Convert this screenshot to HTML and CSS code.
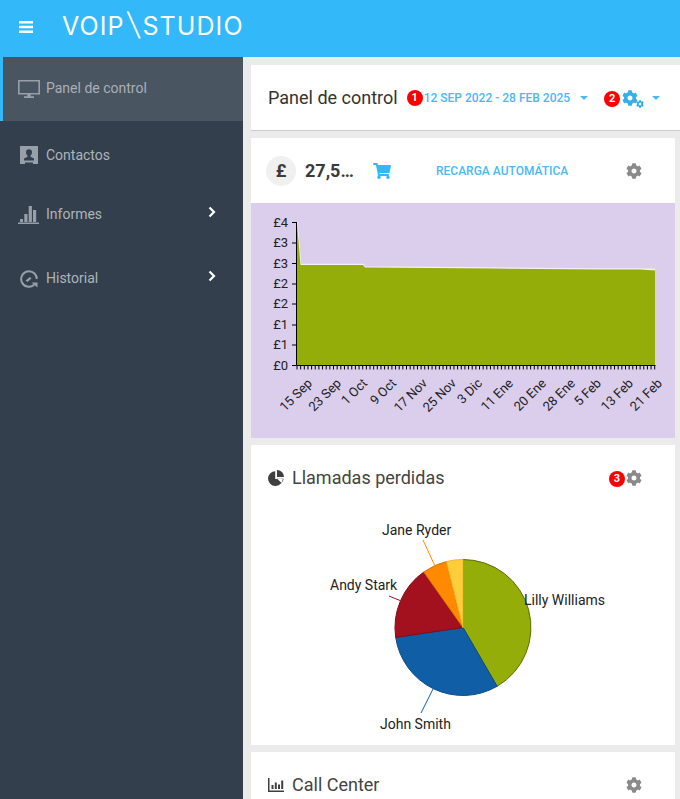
FILE: index.html
```html
<!DOCTYPE html>
<html lang="es">
<head>
<meta charset="utf-8">
<title>VoIPstudio</title>
<link rel="stylesheet" href="styles.css">
</head>
<body>
<svg class="defs" width="0" height="0">
  <symbol id="gear" viewBox="0 0 512 512"><path d="M487.4 315.7l-42.6-24.6c4.3-23.2 4.3-47 0-70.2l42.6-24.6c4.9-2.8 7.1-8.6 5.5-14-11.1-35.6-30-67.8-54.7-94.6-3.8-4.1-10-5.1-14.8-2.3L380.8 110c-17.9-15.4-38.5-27.3-60.8-35.1V25.8c0-5.6-3.9-10.5-9.4-11.7-36.7-8.2-74.3-7.8-109.2 0-5.5 1.2-9.4 6.1-9.4 11.7V75c-22.2 7.9-42.8 19.8-60.8 35.1L88.7 85.5c-4.9-2.8-11-1.9-14.8 2.3-24.7 26.7-43.6 58.9-54.7 94.6-1.7 5.4.6 11.2 5.5 14L67.3 221c-4.3 23.2-4.3 47 0 70.2l-42.6 24.6c-4.9 2.8-7.1 8.6-5.5 14 11.1 35.6 30 67.8 54.7 94.6 3.8 4.1 10 5.1 14.8 2.3l42.6-24.6c17.9 15.4 38.5 27.3 60.8 35.1v49.2c0 5.6 3.9 10.5 9.4 11.7 36.7 8.2 74.3 7.8 109.2 0 5.5-1.2 9.4-6.1 9.4-11.7v-49.2c22.2-7.9 42.8-19.8 60.8-35.1l42.6 24.6c4.9 2.8 11 1.9 14.8-2.3 24.7-26.7 43.6-58.9 54.7-94.6 1.5-5.5-.7-11.3-5.6-14.1zM256 336c-44.1 0-80-35.9-80-80s35.9-80 80-80 80 35.9 80 80-35.9 80-80 80z"/></symbol>
  <symbol id="chev" viewBox="0 0 10 12"><path d="M2.5 1.5 7 6l-4.5 4.500" fill="none" stroke="currentColor" stroke-width="2.200"/></symbol>
</svg>

<header class="topbar">
  <svg class="burger" viewBox="0 0 14 12"><path d="M0 0h14v2.400H0zM0 4.800h14v2.400H0zM0 9.600h14V12H0z"/></svg>
  <div class="logo">VOIP<span class="logo-slash">\</span>STUDIO</div>
</header>

<div class="layout">
  <nav class="sidebar">
    <a class="nav-item nav-active">
      <svg class="nav-icon" viewBox="0 0 22 18"><path d="M0 0h22v14.500H0zM1.600 1.600v11.300h18.800V1.600zM9.300 14.500h3.400v1.800h3.300V18H6v-1.700h3.300z" fill-rule="evenodd"/></svg>
      <span>Panel de control</span>
    </a>
    <a class="nav-item nav-contacts">
      <svg class="nav-icon" viewBox="0 0 22 18"><path d="M2 0h18v18h-5v-1.500h-8V18H2zM11 3.200a3 3 0 0 0-3 3c0 1.500.7 2.700 1.500 3.400v1.200L6 12.500v2h10v-2l-3.500-1.700V9.600c.8-.7 1.500-1.900 1.500-3.400a3 3 0 0 0-3-3z" fill-rule="evenodd"/></svg>
      <span>Contactos</span>
    </a>
    <a class="nav-item nav-reports">
      <svg class="nav-icon" viewBox="0 0 22 18"><path d="M0 16.500h21V18H0zM2 13h3v3H2zM6.300 8h3.200v8H6.300zM10.700 0h3.200v16h-3.200zM15 4h3.200v12H15z"/></svg>
      <span>Informes</span>
      <svg class="nav-chev"><use href="#chev"/></svg>
    </a>
    <a class="nav-item nav-reports">
      <svg class="nav-icon" viewBox="0 0 22 18"><path d="M11 1.200a7.800 7.800 0 1 0 5.200 13.600M18.800 9A7.800 7.800 0 0 0 11 1.200" fill="none" stroke="currentColor" stroke-width="2"/><path d="M7.500 10.500l4.500-3.500 1.500 1.500-4 3.500z"/><path d="M13.500 12.500h6v5z"/></svg>
      <span>Historial</span>
      <svg class="nav-chev"><use href="#chev"/></svg>
    </a>
  </nav>

  <main class="content">
    <section class="page-head">
      <h1 class="page-title">Panel de control</h1>
      <span class="badge badge-one">1</span>
      <span class="date-range">12 SEP 2022 - 28 FEB 2025</span>
      <span class="caret caret-date"></span>
      <span class="badge badge-two">2</span>
      <span class="gears">
        <svg class="gear-big"><use href="#gear"/></svg>
        <svg class="gear-small"><use href="#gear"/></svg>
      </span>
      <span class="caret caret-gears"></span>
    </section>

    <section class="card">
      <div class="balance-row">
        <span class="currency">£</span>
        <span class="amount">27,5…</span>
        <svg class="cart" viewBox="0 0 576 512"><path d="M528.12 301.319l47.273-208C578.806 78.301 567.391 64 551.99 64H159.208l-9.166-44.81C147.758 8.021 137.93 0 126.529 0H24C10.745 0 0 10.745 0 24v16c0 13.255 10.745 24 24 24h69.883l70.248 343.435C147.325 417.1 136 435.222 136 456c0 30.928 25.072 56 56 56s56-25.072 56-56c0-15.674-6.447-29.835-16.824-40h209.647C430.447 426.165 424 440.326 424 456c0 30.928 25.072 56 56 56s56-25.072 56-56c0-22.172-12.888-41.332-31.579-50.405l5.517-24.276c3.413-15.018-8.002-29.319-23.403-29.319H218.117l-6.545-32h293.145c11.206 0 20.92-7.754 23.403-18.681z"/></svg>
        <span class="recharge">RECARGA AUTOMÁTICA</span>
        <svg class="gear"><use href="#gear"/></svg>
      </div>
      <svg class="balance-chart" viewBox="251 203 424 235">
        <path class="area-edge" d="M297 222 300.500 264.500H363L365 267 490 268 595 269 640 269 655 269.500"/>
        <path class="area" d="M297 223 300.500 265H363L365 267.500 490 268.500 595 269.500 640 269.500 655 270.500V365H297z"/>
        <path class="axis" d="M296.500 222V365.500H655.500"/>
        <path class="axis" d="M292 222.500h4M292 243h4M292 263.500h4M292 284h4M292 304h4M292 325h4M292 345h4M292 365.500h4"/>
        <path class="x-ticks" d="M296.500 367.500H656"/>
        <g class="chart-text axis-text y-labels">
          <text x="288" y="227">£4</text>
          <text x="288" y="247">£3</text>
          <text x="288" y="268">£3</text>
          <text x="288" y="288">£2</text>
          <text x="288" y="308">£2</text>
          <text x="288" y="329">£1</text>
          <text x="288" y="349">£1</text>
          <text x="288" y="370">£0</text>
        </g>
        <g class="chart-text axis-text x-labels">
          <text transform="translate(313 384) rotate(-45)">15 Sep</text>
          <text transform="translate(342 384) rotate(-45)">23 Sep</text>
          <text transform="translate(368 384) rotate(-45)">1 Oct</text>
          <text transform="translate(397 384) rotate(-45)">9 Oct</text>
          <text transform="translate(428 384) rotate(-45)">17 Nov</text>
          <text transform="translate(457 384) rotate(-45)">25 Nov</text>
          <text transform="translate(483 384) rotate(-45)">3 Dic</text>
          <text transform="translate(514 384) rotate(-45)">11 Ene</text>
          <text transform="translate(547 384) rotate(-45)">20 Ene</text>
          <text transform="translate(576 384) rotate(-45)">28 Ene</text>
          <text transform="translate(602 384) rotate(-45)">5 Feb</text>
          <text transform="translate(634 384) rotate(-45)">13 Feb</text>
          <text transform="translate(663 384) rotate(-45)">21 Feb</text>
        </g>
      </svg>
    </section>

    <section class="card card-pie">
      <div class="card-head">
        <svg class="head-icon" viewBox="0 0 16 16"><path d="M7.200 1.200A7.400 7.400 0 1 0 14.800 9H7.200zM9 0v7h7a7 7 0 0 0-7-7zM9.200 8.800h6.400c-.2 1.600-.9 3-2 4.100z"/></svg>
        <h2 class="card-title">Llamadas perdidas</h2>
        <span class="badge badge-three">3</span>
        <svg class="gear"><use href="#gear"/></svg>
      </div>
      <svg class="pie-chart" viewBox="251 510 424 235">
        <path class="lead" stroke="#ff8a00" d="M423 540 434.500 565"/>
        <path class="lead" stroke="#a3111f" d="M389 596 400 600.500"/>
        <path class="lead" stroke="#105ea6" d="M421 713 433 689"/>
        <path fill="#95ad08" stroke="#5e6d05" d="M463 627.500V559.500A68 68 0 0 1 497.100 686.300z"/>
        <path fill="#105ea6" stroke="#0c4a83" d="M463 627.500 497.100 686.300A68 68 0 0 1 395.700 637.400z"/>
        <path fill="#a3111f" stroke="#7f0d18" d="M463 627.500 395.700 637.400A68 68 0 0 1 423.800 572z"/>
        <path fill="#ff8a00" stroke="#d97500" d="M463 627.500 423.800 572A68 68 0 0 1 446.500 561.500z"/>
        <path fill="#ffcc3a" stroke="#e8b830" d="M463 627.500 446.500 561.500A68 68 0 0 1 463 559.500z"/>
        <g class="chart-text">
          <text x="382" y="535">Jane Ryder</text>
          <text x="330" y="590">Andy Stark</text>
          <text x="524" y="605">Lilly Williams</text>
          <text x="380" y="729">John Smith</text>
        </g>
      </svg>
    </section>

    <section class="card card-last">
      <div class="card-head">
        <svg class="head-icon" viewBox="0 0 16 16"><path d="M0 1h1.500v12.500H16V15H0zM3.500 8h2v4h-2zM6.800 5.500h2V12h-2zM10 7.500h2V12h-2zM13.200 3.500h2V12h-2z"/></svg>
        <h2 class="card-title">Call Center</h2>
        <svg class="gear"><use href="#gear"/></svg>
      </div>
    </section>
  </main>
</div>
</body>
</html>
```

FILE: styles.css
```css
* { box-sizing: border-box; }
html, body { margin: 0; padding: 0; height: 799px; overflow: hidden; }
body { font-family: Roboto, "Liberation Sans", sans-serif; background: #ebebeb; color: #333; }
.defs { position: absolute; }

.topbar { height: 57px; background: #33b8f9; display: flex; align-items: center; color: #fff; }
.burger { width: 14px; height: 12px; margin: 0 0 0 19px; fill: #fff; position: relative; top: -2px; }
.logo { margin-left: 29px; font-family: Inter, "Open Sans", sans-serif; font-size: 25px; font-weight: 400; line-height: 30px; letter-spacing: 1.100px; position: relative; top: -3.500px; white-space: nowrap; }
.logo-slash { display: inline-block; font-size: 31px; font-weight: 300; line-height: 30px; transform: skewX(10deg); margin: 0 4px 0 3px; letter-spacing: 0; }

.layout { display: flex; height: 742px; }
.sidebar { width: 243px; flex: none; background: #333f4d; }
.nav-item { display: flex; align-items: center; height: 64px; padding-left: 18px; font-size: 14px; line-height: 20px; color: #aeb4ba; }
.nav-active { background: #4a5562; border-left: 3px solid #33b8f9; padding-left: 15px; padding-bottom: 2px; color: #a9afb5; }
.nav-active .nav-icon { margin-top: 2px; }
.nav-contacts { height: 61px; padding-top: 7px; }
.nav-reports { height: 64px; }
.nav-reports .nav-icon { margin-top: 2px; }
.nav-icon { width: 22px; height: 18px; margin-right: 6px; flex: none; fill: #97a0aa; color: #97a0aa; }
.nav-chev { width: 10px; height: 12px; margin-left: auto; margin-right: 26px; margin-top: -4px; color: #fff; }

.content { flex: 1; min-width: 0; padding: 8px 5px 0 8px; display: flex; flex-direction: column; gap: 7px; }

.page-head { height: 66px; flex: none; margin-right: -5px; background: #fff; border-bottom: 1px solid #ccc; display: flex; align-items: center; padding-left: 17px; }
.page-title { margin: 0; font-size: 18px; font-weight: 400; color: #333; white-space: nowrap; }
.badge { flex: none; width: 16px; height: 16px; border-radius: 50%; background: #f00; color: #fff; font-size: 11px; font-weight: 700; line-height: 16px; text-align: center; }
.badge-one { margin-left: 9px; }
.date-range { font-size: 12px; font-weight: 500; color: #4ab9f5; margin-left: 1px; white-space: nowrap; }
.caret { width: 0; height: 0; border: 4px solid transparent; border-top-color: #4ab9f5; border-bottom: 0; flex: none; margin-top: 1px; }
.caret-date { margin-left: 10px; }
.badge-two { margin-left: 16px; margin-top: 3px; }
.gears { display: flex; align-items: flex-end; height: 20px; flex: none; margin-left: 2px; }
.gear-big { width: 16px; height: 16px; fill: #35aeec; margin-bottom: 2px; }
.gear-small { width: 8px; height: 8px; fill: #35aeec; margin-left: -2px; }
.caret-gears { margin-left: 8px; }

.card { background: #fff; flex: none; }
.balance-row { height: 65px; display: flex; align-items: center; padding-left: 15px; }
.currency { width: 30px; height: 30px; border-radius: 50%; background: #f0f0f0; font-size: 18px; font-weight: 700; line-height: 30px; text-align: center; color: #3c3c3c; flex: none; }
.amount { margin-left: 9px; font-size: 18px; font-weight: 700; color: #3a3a3a; width: 68px; flex: none; }
.cart { width: 18px; height: 16px; fill: #33b8f9; flex: none; }
.recharge { margin-left: 45px; font-size: 12px; font-weight: 500; color: #4ab9f5; width: 190px; flex: none; white-space: nowrap; }
.gear { width: 16px; height: 16px; fill: #8a8a8a; flex: none; }
.balance-row .gear, .card-head .gear { margin-left: auto; margin-right: 33px; }
.balance-chart { display: block; width: 424px; height: 235px; background: #dbcdec; }
.area { fill: #95ad08; }
.area-edge { fill: none; stroke: #f3f1f5; stroke-width: 1.500; }
.axis { fill: none; stroke: #000; stroke-width: 1; }
.x-ticks { fill: none; stroke: #000; stroke-width: 4; stroke-dasharray: 1 2.650; }
.chart-text { font-family: Roboto, "Liberation Sans", sans-serif; font-size: 14px; fill: #222; }
.axis-text { font-size: 13px; }
.y-labels { text-anchor: end; }
.x-labels { text-anchor: end; }

.card-pie { height: 300px; }
.card-head { height: 65px; display: flex; align-items: center; padding-left: 17px; }
.head-icon { width: 16px; height: 16px; fill: #3f3f3f; margin-right: 8px; flex: none; }
.card-title { margin: 0; font-size: 18px; font-weight: 400; color: #444; white-space: nowrap; }
.badge-three { margin-left: auto; margin-right: 1px; margin-top: 2px; }
.card-head .badge-three + .gear { margin-left: 0; }
.pie-chart { display: block; width: 424px; height: 235px; }
.lead { fill: none; stroke-width: 1; }
.card-last { height: 60px; }
```
